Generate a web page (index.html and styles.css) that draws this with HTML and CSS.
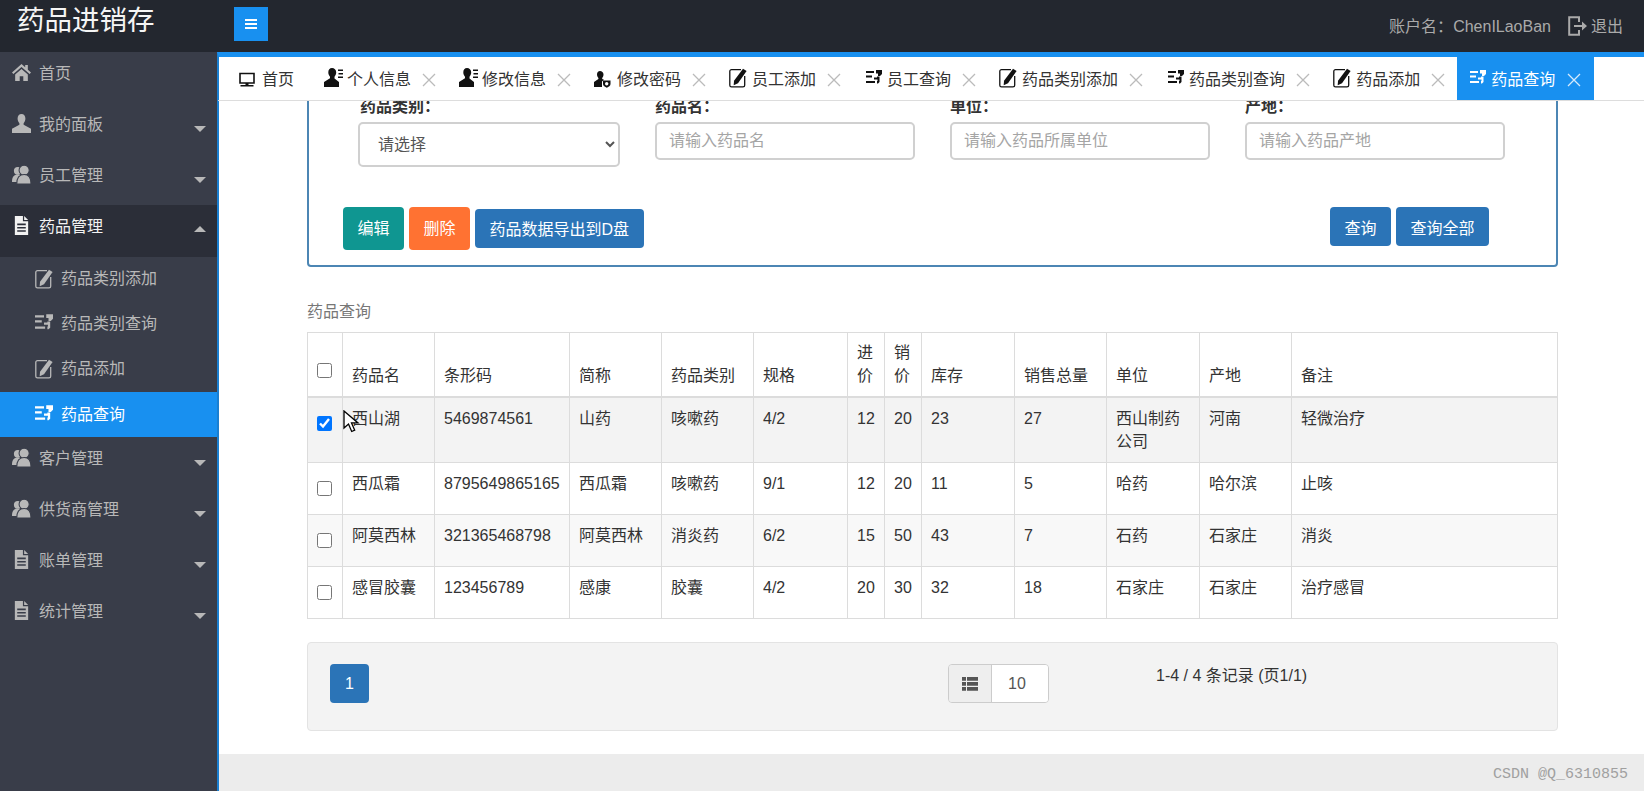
FILE: index.html
```html
<!DOCTYPE html>
<html lang="zh-CN">
  <head>
    <meta charset="UTF-8" />
    <title>药品进销存</title>
    <link rel="stylesheet" href="styles.css">
  </head>
  <body>
    <svg class="defs" width="0" height="0">
      <symbol id="i-monitor" viewBox="0 0 16 16"><path d="M1 1.500h14v9.500h-14z" fill="none" stroke="currentColor" stroke-width="1.600"/><path d="M6.500 11h3v2.200h-3zM1.500 13h13v1.600h-13z" fill="currentColor"/></symbol>
      <symbol id="i-home" viewBox="0 0 18 16"><path d="M9 0 0 8l1.300 1.500L9 2.800l7.700 6.700L18 8l-3-2.700V1h-2.500v2.100z" fill="currentColor"/><path d="M3 10 9 4.600 15 10v6h-4.300v-4.500H7.300V16H3z" fill="currentColor"/></symbol>
      <symbol id="i-user" viewBox="0 0 18 18"><path d="M9 0C6.700 0 5.300 1.800 5.300 4.300c0 2 .8 3.500 1.700 4.400v1.600L0 14v4h18v-4l-7-3.700V8.700c.9-.9 1.700-2.400 1.700-4.400C12.700 1.800 11.300 0 9 0z" fill="currentColor"/></symbol>
      <symbol id="i-users" viewBox="0 0 18 18"><circle cx="5.500" cy="5.500" r="3.700" fill="currentColor"/><path d="M0 16c0-5 2-7 5.500-7S8 11 8 16z" fill="currentColor"/><circle cx="11.500" cy="5" r="4.800" fill="currentColor" stroke="#393d49" stroke-width="1"/><path d="M4.500 18c0-6 2.500-9 7-9s6.500 3 6.500 9z" fill="currentColor" stroke="#393d49" stroke-width="1"/></symbol>
      <symbol id="i-file" viewBox="0 0 16 20"><path fill-rule="evenodd" d="M1 0h8.500v5.500H15V20H1zM10.800 0 15 4.200h-4.200zM3.500 8v1.700h9V8zM3.500 11.500v1.700h9v-1.700zM3.500 15v1.700h9V15z" fill="currentColor"/></symbol>
      <symbol id="i-edit" viewBox="0 0 18 20"><path d="M12 1.600H2.500a1.700 1.700 0 0 0-1.700 1.700v13.900a1.700 1.700 0 0 0 1.700 1.700h11.500a1.700 1.700 0 0 0 1.700-1.700V8" fill="none" stroke="currentColor" stroke-width="1.300"/><path d="M14 .8 17.600 3 9 15.300 4.700 17.200 5 12.700z" fill="currentColor"/></symbol>
      <symbol id="i-query" viewBox="0 0 16 14"><path d="M0 1h8v2H0zM0 5.500h6v2H0zM0 11h9v2H0z" fill="currentColor"/><path d="M10 0h6v4l-2 2h-2V3.500h-2zM8 7.500h3v-1h2.500v5.500L12 13.500h-1V11h.5V9.500H8z" fill="currentColor"/></symbol>
      <symbol id="i-userlist" viewBox="0 0 20 19"><path d="M8 0C5.700 0 4.300 1.800 4.300 4.300c0 2 .8 3.500 1.700 4.400v1.600L0 14v5h15v-5l-4.500-3.500V8.700c.9-.9 1.700-2.400 1.700-4.400C12.200 1.800 10.300 0 8 0z" fill="currentColor"/><path d="M14 1.500h5v1.400h-5zM14.500 5h4.500v1.400h-4.500zM14 8.500h5v1.400h-5z" fill="currentColor"/></symbol>
      <symbol id="i-userlock" viewBox="0 0 17 17"><path d="M6 0C4.200 0 3 1.500 3 3.500c0 1.500.7 2.700 1.400 3.400v1.200L0 11v5h8V10.500l2-1.700-1.800-.8V6.900C8.900 6.200 9.500 5 9.500 3.500 9.500 1.500 7.800 0 6 0z" fill="currentColor"/><path d="M9 9.500h7.500v3.500c0 1.800-2 3-3.700 3.800C11 16 9 14.800 9 13z" fill="currentColor"/><circle cx="12.700" cy="12.700" r="1.700" fill="#fff"/></symbol>
      <symbol id="i-close" viewBox="0 0 14 14"><path d="M1 1l12 12M13 1 1 13" fill="none" stroke="currentColor" stroke-width="1.300"/></symbol>
      <symbol id="i-list" viewBox="0 0 16 14"><path d="M0 0h4v3.800H0zM5 0h11v3.800H5zM0 5h4v3.800H0zM5 5h11v3.800H5zM0 10h4v3.800H0zM5 10h11v3.800H5z" fill="currentColor"/></symbol>
      <symbol id="i-logout" viewBox="0 0 19 20"><path d="M11 6V1.200H1.200v17.600H11V14" fill="none" stroke="currentColor" stroke-width="2"/><path d="M6 9h8V5.500l5 4.500-5 4.500V11H6z" fill="currentColor"/></symbol>
    </svg>

    <header class="topbar">
      <div class="logo">药品进销存</div>
      <button class="menuBtn"><span></span><span></span><span></span></button>
      <div class="account">
        <span>账户名<span class="colon">：</span>ChenILaoBan</span>
        <svg class="logoutIcon"><use href="#i-logout"/></svg>
        <span>退出</span>
      </div>
    </header>

    <div class="layout">
      <nav class="sidebar">
        <a class="navItem"><svg class="navIcon"><use href="#i-home"/></svg>首页</a>
        <a class="navItem"><svg class="navIcon"><use href="#i-user"/></svg>我的面板<i class="caret"></i></a>
        <a class="navItem"><svg class="navIcon"><use href="#i-users"/></svg>员工管理<i class="caret"></i></a>
        <a class="navItem open"><svg class="navIcon"><use href="#i-file"/></svg>药品管理<i class="caret up"></i></a>
        <a class="subItem"><svg class="subIcon"><use href="#i-edit"/></svg>药品类别添加</a>
        <a class="subItem"><svg class="subIcon query"><use href="#i-query"/></svg>药品类别查询</a>
        <a class="subItem"><svg class="subIcon"><use href="#i-edit"/></svg>药品添加</a>
        <a class="subItem active"><svg class="subIcon query"><use href="#i-query"/></svg>药品查询</a>
        <a class="navItem"><svg class="navIcon"><use href="#i-users"/></svg>客户管理<i class="caret"></i></a>
        <a class="navItem"><svg class="navIcon"><use href="#i-users"/></svg>供货商管理<i class="caret"></i></a>
        <a class="navItem"><svg class="navIcon"><use href="#i-file"/></svg>账单管理<i class="caret"></i></a>
        <a class="navItem"><svg class="navIcon"><use href="#i-file"/></svg>统计管理<i class="caret"></i></a>
      </nav>

      <main class="main">
        <div class="tabs">
          <div class="tab home"><span class="tabIcon"><svg class="ti-monitor"><use href="#i-monitor"/></svg></span>首页</div>
          <div class="tab"><span class="tabIcon"><svg class="ti-user"><use href="#i-userlist"/></svg></span>个人信息<svg class="close"><use href="#i-close"/></svg></div>
          <div class="tab"><span class="tabIcon"><svg class="ti-user"><use href="#i-userlist"/></svg></span>修改信息<svg class="close"><use href="#i-close"/></svg></div>
          <div class="tab"><span class="tabIcon"><svg class="ti-lock"><use href="#i-userlock"/></svg></span>修改密码<svg class="close"><use href="#i-close"/></svg></div>
          <div class="tab"><span class="tabIcon"><svg class="ti-edit"><use href="#i-edit"/></svg></span>员工添加<svg class="close"><use href="#i-close"/></svg></div>
          <div class="tab"><span class="tabIcon"><svg class="ti-query"><use href="#i-query"/></svg></span>员工查询<svg class="close"><use href="#i-close"/></svg></div>
          <div class="tab"><span class="tabIcon"><svg class="ti-edit"><use href="#i-edit"/></svg></span>药品类别添加<svg class="close"><use href="#i-close"/></svg></div>
          <div class="tab"><span class="tabIcon"><svg class="ti-query"><use href="#i-query"/></svg></span>药品类别查询<svg class="close"><use href="#i-close"/></svg></div>
          <div class="tab"><span class="tabIcon"><svg class="ti-edit"><use href="#i-edit"/></svg></span>药品添加<svg class="close"><use href="#i-close"/></svg></div>
          <div class="tab active"><span class="tabIcon"><svg class="ti-query"><use href="#i-query"/></svg></span>药品查询<svg class="close"><use href="#i-close"/></svg></div>
        </div>

        <div class="content">
          <div class="page">
            <section class="searchBox">
              <div class="fields">
                <div class="field">
                  <label>药品类别<span class="colon">：</span></label>
                  <select class="control tall"><option>请选择</option></select>
                </div>
                <div class="field">
                  <label>药品名<span class="colon">：</span></label>
                  <input class="control" placeholder="请输入药品名">
                </div>
                <div class="field">
                  <label>单位<span class="colon">：</span></label>
                  <input class="control" placeholder="请输入药品所属单位">
                </div>
                <div class="field">
                  <label>产地<span class="colon">：</span></label>
                  <input class="control" placeholder="请输入药品产地">
                </div>
              </div>
              <div class="actions">
                <div class="btnGroup left">
                  <button class="btn big green">编辑</button>
                  <button class="btn big orange">删除</button>
                  <button class="btn blue">药品数据导出到D盘</button>
                </div>
                <div class="btnGroup top">
                  <button class="btn blue">查询</button>
                  <button class="btn blue">查询全部</button>
                </div>
              </div>
            </section>

            <div class="caption">药品查询</div>
            <table class="dataTable">
              <colgroup>
                <col class="c35"><col class="c92"><col class="c135"><col class="c92"><col class="c92"><col class="c94"><col class="c37"><col class="c37"><col class="c93"><col class="c92"><col class="c93"><col class="c92"><col>
              </colgroup>
              <thead>
                <tr>
                  <th><input type="checkbox" class="check head"></th>
                  <th>药品名</th><th>条形码</th><th>简称</th><th>药品类别</th><th>规格</th><th>进价</th><th>销价</th><th>库存</th><th>销售总量</th><th>单位</th><th>产地</th><th>备注</th>
                </tr>
              </thead>
              <tbody>
                <tr class="selected">
                  <td><input type="checkbox" class="check" checked></td>
                  <td>西山湖</td><td>5469874561</td><td>山药</td><td>咳嗽药</td><td>4/2</td><td>12</td><td>20</td><td>23</td><td>27</td><td>西山制药公司</td><td>河南</td><td>轻微治疗</td>
                </tr>
                <tr>
                  <td><input type="checkbox" class="check"></td>
                  <td>西瓜霜</td><td>8795649865165</td><td>西瓜霜</td><td>咳嗽药</td><td>9/1</td><td>12</td><td>20</td><td>11</td><td>5</td><td>哈药</td><td>哈尔滨</td><td>止咳</td>
                </tr>
                <tr class="odd">
                  <td><input type="checkbox" class="check"></td>
                  <td>阿莫西林</td><td>321365468798</td><td>阿莫西林</td><td>消炎药</td><td>6/2</td><td>15</td><td>50</td><td>43</td><td>7</td><td>石药</td><td>石家庄</td><td>消炎</td>
                </tr>
                <tr>
                  <td><input type="checkbox" class="check"></td>
                  <td>感冒胶囊</td><td>123456789</td><td>感康</td><td>胶囊</td><td>4/2</td><td>20</td><td>30</td><td>32</td><td>18</td><td>石家庄</td><td>石家庄</td><td>治疗感冒</td>
                </tr>
              </tbody>
            </table>

            <div class="pager">
              <button class="pageBtn">1</button>
              <div class="pageSize">
                <span class="addon"><svg class="listIcon"><use href="#i-list"/></svg></span>
                <input class="sizeInput" value="10">
              </div>
              <div class="pageInfo">1-4 / 4 条记录 (页1/1)</div>
            </div>
          </div>
          <footer class="footer"></footer>
        </div>
      </main>
    </div>

    <svg class="cursor" viewBox="0 0 18 23"><path d="M1 1v17l4.500-4 3.200 7.500 3-1.300-3.200-7.300H15z" fill="#fff" stroke="#000" stroke-width="1.300"/></svg>
    <div class="watermark">CSDN @Q_6310855</div>
  </body>
</html>
```

FILE: styles.css
```css
* {
  box-sizing: border-box;
}
html,
body {
  margin: 0;
  height: 791px;
  overflow: hidden;
}
body {
  position: relative;
  background-color: #fff;
  color: #333;
  font-family: "Liberation Sans", "Noto Sans CJK SC", sans-serif;
  font-size: 16px;
  line-height: 23px;
}
.defs {
  display: block;
  height: 0;
}
/* the centred full-width colon */
.colon {
  font-family: "Noto Sans CJK TC", sans-serif;
}

/* top bar */
.topbar {
  display: flex;
  height: 52px;
  background-color: #23272f;
  color: #aaa;
}
.logo {
  width: 234px;
  padding: 3px 0 0 17px;
  color: #f5f5f5;
  font-size: 27.500px;
  line-height: 36px;
}
.menuBtn {
  display: flex;
  flex-direction: column;
  justify-content: center;
  align-items: center;
  gap: 2px;
  width: 34px;
  height: 34px;
  margin-top: 7px;
  padding: 0;
  border: none;
  background-color: #1890f0;
}
.menuBtn span {
  width: 12px;
  height: 2px;
  background-color: #fff;
}
.account {
  display: flex;
  align-items: center;
  margin-left: auto;
  height: 52px;
  padding: 0 21px 0 0;
}
.logoutIcon {
  width: 19px;
  height: 20px;
  margin: 0 4px 0 17px;
}

/* sidebar */
.layout {
  display: flex;
  height: 739px;
}
.sidebar {
  flex: none;
  width: 217px;
  background-color: #393d49;
  color: #b8b8b8;
}
.navItem {
  display: flex;
  align-items: flex-start;
  height: 51px;
  padding: 10px 11px 0 12px;
}
.navItem.open {
  height: 52px;
  background-color: #2b2e38;
  color: #f2f2f2;
}
.navIcon {
  flex: none;
  width: 19px;
  height: 19px;
  margin: 1px 8px 0 0;
}
.caret {
  width: 0;
  height: 0;
  margin: 13px 0 0 auto;
  border-left: 6.500px solid transparent;
  border-right: 6.500px solid transparent;
  border-top: 6.500px solid #b8b8b8;
}
.caret.up {
  margin-top: 11px;
  border-top: none;
  border-bottom: 6.500px solid #b8b8b8;
}
.subItem {
  display: flex;
  align-items: center;
  height: 45px;
  padding: 0 0 2px 35px;
}
.subItem.active {
  padding-bottom: 0;
  background-color: #1890f0;
  color: #fff;
}
.subIcon {
  flex: none;
  width: 18px;
  height: 20px;
  margin-right: 8px;
}
.subIcon.query {
  height: 16px;
  margin-bottom: 4px;
}

/* main area */
.main {
  display: flex;
  flex-direction: column;
  flex: 1;
  min-width: 0;
  border-top: 5px solid #1890f0;
  border-left: 2px solid #1b7fd0;
}
.tabs {
  display: flex;
  flex: none;
  height: 44px;
  margin-left: -1px;
  border-bottom: 1px solid #ddd;
  color: #333;
}
.tab {
  display: flex;
  align-items: center;
  height: 43px;
  padding: 2px 11px 0 12px;
  white-space: nowrap;
}
.tab.home {
  padding: 2px 18px 0 21px;
}
.tab.active {
  margin: 0 -3px 0 1px;
  padding: 2px 13px 0 11px;
  background-color: #1890f0;
  color: #fff;
}
.tabIcon {
  display: flex;
  align-items: center;
  flex: none;
  width: 23px;
  height: 22px;
  color: #111;
}
.tab.active .tabIcon {
  color: #fff;
}
.ti-monitor {
  width: 16px;
  height: 16px;
}
.ti-user {
  width: 20px;
  height: 19px;
  margin-bottom: 4px;
}
.ti-lock {
  width: 17px;
  height: 17px;
}
.ti-edit {
  width: 18px;
  height: 20px;
  margin-bottom: 4px;
}
.ti-query {
  width: 16px;
  height: 14px;
  margin: 0 0 5px 2px;
}
.close {
  flex: none;
  width: 14px;
  height: 14px;
  margin-left: 11px;
  color: #bbb;
}
.tab.active .close {
  margin-left: 12px;
  color: #d5eafc;
}

.content {
  flex: 1;
  overflow: hidden;
}
.page {
  margin-top: -20px;
  padding: 0 86px 0 88px;
}

/* search form */
.searchBox {
  height: 186px;
  border: 2px solid #4c86b4;
  border-radius: 4px;
}
.fields {
  display: grid;
  grid-template-columns: repeat(4, 295px);
  padding: 11px 0 0 51px;
}
.field label {
  display: block;
  margin-bottom: 4px;
  font-weight: bold;
}
.control {
  display: block;
  width: 260px;
  height: 38px;
  padding: 0 12px;
  border: 2px solid #d0d0d0;
  border-radius: 5px;
  background-color: #fff;
  color: #555;
  font-family: inherit;
  font-size: 16px;
}
.control::placeholder {
  color: #a5a5a5;
}
.control.tall {
  width: 262px;
  height: 45px;
  margin-left: -2px;
  padding-left: 14px;
}
.actions {
  display: flex;
  justify-content: space-between;
  align-items: flex-start;
  margin-top: 40px;
  padding: 0 67px 0 34px;
}
.btnGroup {
  display: flex;
  align-items: center;
  gap: 5px;
  height: 43px;
}
.btnGroup.top {
  align-items: flex-start;
}
.btn {
  height: 39px;
  padding: 0 14.500px;
  border: none;
  border-radius: 4px;
  color: #fff;
  font-family: inherit;
  font-size: 16px;
}
.btnGroup.left .btn {
  padding-bottom: 2px;
}
.btnGroup.left .btn.big {
  height: 43px;
  padding: 0 14.500px 3px;
}
.green {
  background-color: #0f9691;
}
.orange {
  background-color: #ff7232;
}
.blue {
  background-color: #2b74b7;
}

/* table */
.caption {
  height: 32px;
  margin-top: 33px;
  color: #777;
}
.dataTable {
  width: 100%;
  table-layout: fixed;
  border-collapse: collapse;
  border: 1px solid #dcdcdc;
}
.c35 { width: 35px; }
.c37 { width: 37px; }
.c92 { width: 92px; }
.c93 { width: 93px; }
.c94 { width: 94px; }
.c135 { width: 135px; }
.dataTable th,
.dataTable td {
  padding: 9px 9px 9px;
  border: 1px solid #dcdcdc;
  vertical-align: top;
  text-align: left;
  font-weight: normal;
}
.dataTable th {
  padding: 8px 9px 9px;
  vertical-align: bottom;
  border-bottom-width: 2px;
}
.dataTable td {
  height: 52px;
}
.dataTable td:first-child,
.dataTable th:first-child {
  padding-left: 9px;
  padding-right: 0;
}
.dataTable tr.selected td {
  background-color: #f3f3f3;
}
.dataTable tr.odd td {
  background-color: #f8f8f8;
}
.check {
  display: block;
  width: 15px;
  height: 15px;
  margin: 9px 0 0;
}
.check.head {
  margin: 0 0 9px;
}

/* pagination */
.pager {
  display: grid;
  grid-template-columns: 618px 208px auto;
  align-items: start;
  height: 89px;
  margin-top: 23px;
  padding: 21px 0 0 22px;
  border: 1px solid #e3e3e3;
  border-radius: 4px;
  background-color: #f3f3f3;
}
.pageBtn {
  width: 39px;
  height: 39px;
  padding: 0;
  border: none;
  border-radius: 4px;
  background-color: #2b74b7;
  color: #fff;
  font-family: inherit;
  font-size: 16px;
}
.pageSize {
  display: flex;
  width: 101px;
  height: 39px;
  border: 1px solid #ccc;
  border-radius: 4px;
  overflow: hidden;
}
.addon {
  display: flex;
  justify-content: center;
  align-items: center;
  flex: none;
  width: 43px;
  background-color: #eee;
  border-right: 1px solid #ccc;
}
.listIcon {
  width: 16px;
  height: 14px;
  color: #555;
}
.sizeInput {
  width: 57px;
  padding: 0 0 0 16px;
  border: none;
  background-color: #fff;
  color: #555;
  font-family: inherit;
  font-size: 16px;
}
.pageInfo {
  white-space: nowrap;
}

.footer {
  height: 40px;
  margin-top: 23px;
  background-color: #ececec;
}

/* things lying over the page */
.cursor {
  position: absolute;
  left: 343px;
  top: 410px;
  width: 18px;
  height: 23px;
}
.watermark {
  position: absolute;
  right: 16px;
  top: 763px;
  color: #a0a0a0;
  font-family: "Liberation Mono", monospace;
  font-size: 15px;
}
```
